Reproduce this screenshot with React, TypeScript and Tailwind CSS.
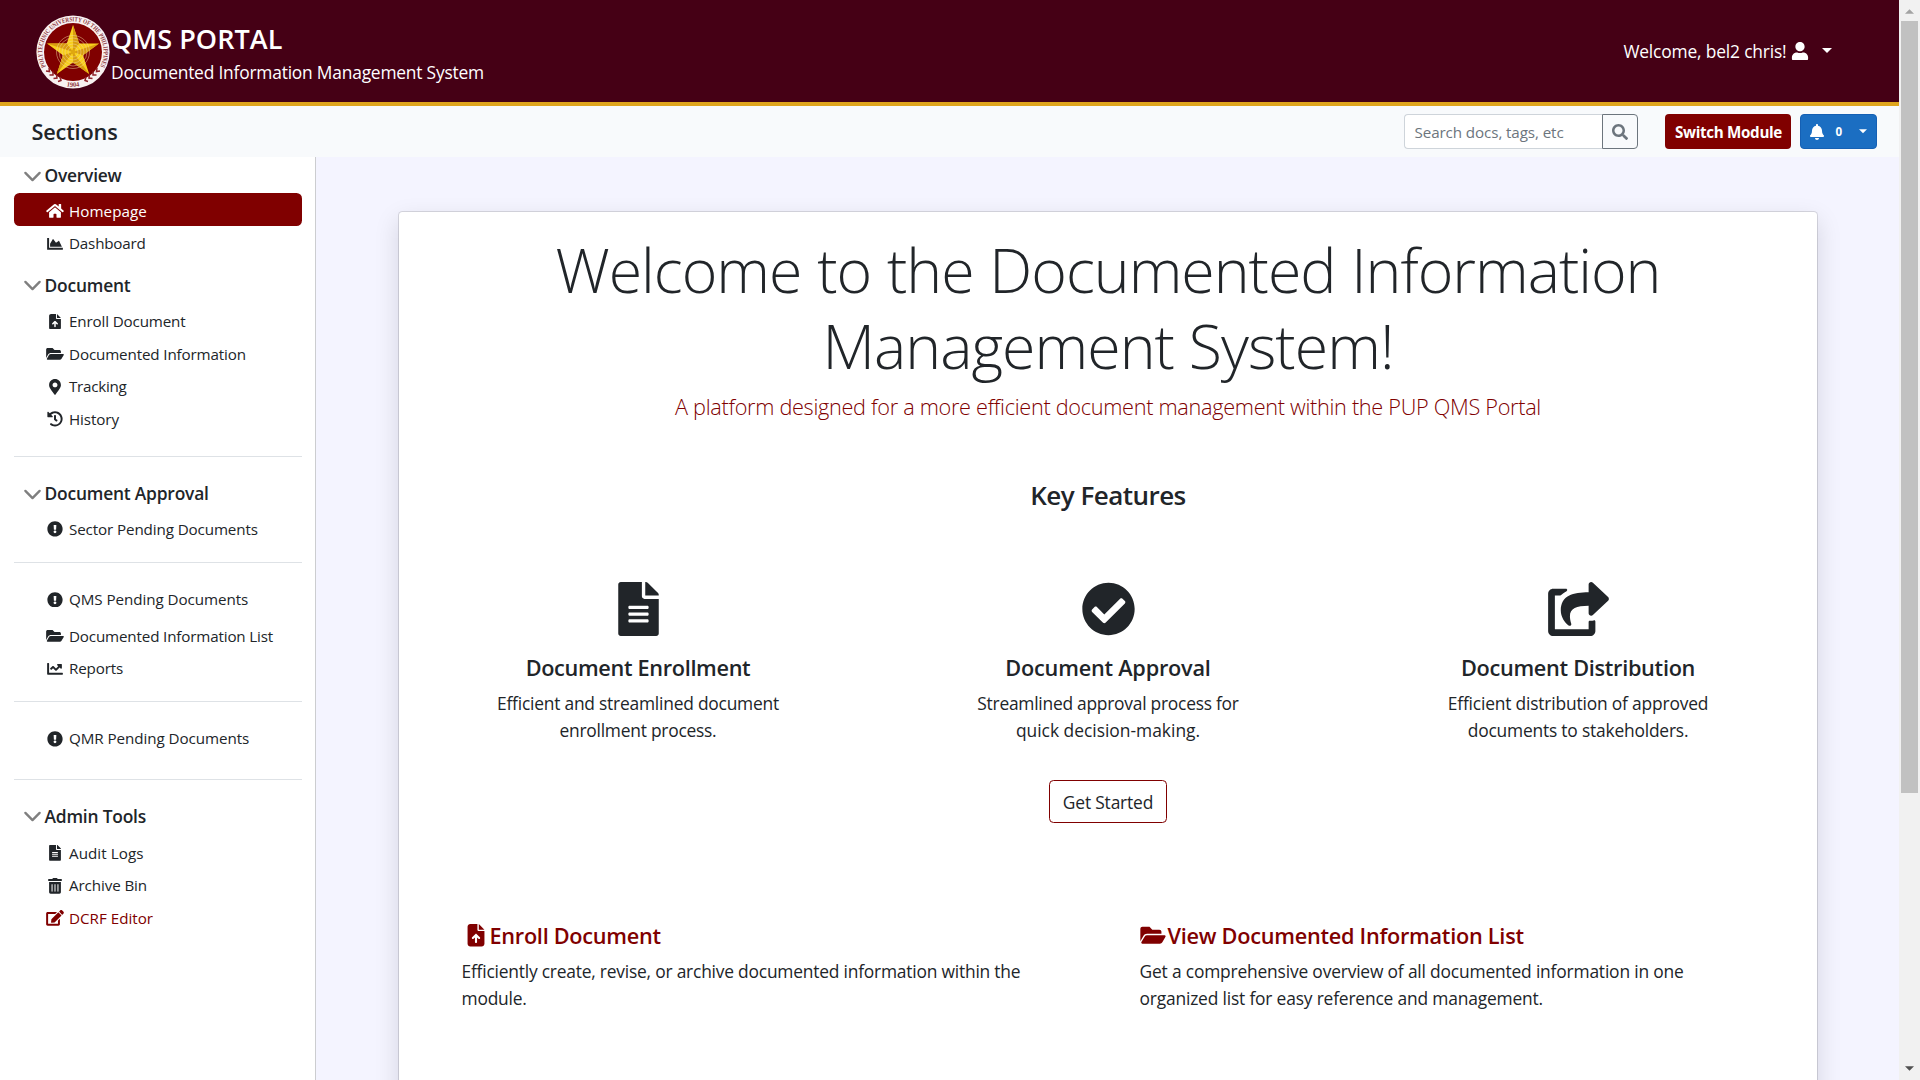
import type { ReactNode } from "react";
import type { IconType } from "react-icons";
import {
  FaBell,
  FaChartArea,
  FaChartLine,
  FaCheckCircle,
  FaEdit,
  FaExclamationCircle,
  FaFileAlt,
  FaFolderOpen,
  FaHistory,
  FaHome,
  FaMapMarkerAlt,
  FaSearch,
  FaShareSquare,
  FaTrashAlt,
  FaUser,
} from "react-icons/fa";
import { FaFileArrowUp } from "react-icons/fa6";

function Seal() {
  const rings = [5, 8, 11, 14, 16.5];
  return (
    <svg viewBox="0 0 74 74" className="h-[74px] w-[74px] shrink-0">
      <defs>
        <path id="sealTop" d="M9.9 51.5 A30.7 30.7 0 1 1 64.1 51.5" />
        <path id="sealBottom" d="M24 69.3 A34.8 34.8 0 0 0 50 69.3" />
      </defs>
      <circle cx="37" cy="37" r="36.6" fill="#f8f1f1" />
      <circle cx="37" cy="37" r="29" fill="#800000" />
      <text fontFamily="Liberation Serif" fontSize="6.6" fontWeight="700" fill="#8f3a40">
        <textPath href="#sealTop" textLength="126" lengthAdjust="spacingAndGlyphs">
          POLYTECHNIC UNIVERSITY OF THE PHILIPPINES
        </textPath>
      </text>
      <text fontFamily="Liberation Serif" fontSize="6.6" fontWeight="700" fill="#8f3a40" textAnchor="middle">
        <textPath href="#sealBottom" startOffset="50%">
          1904
        </textPath>
      </text>
      <g fill="none" stroke="#8f2028" strokeWidth="1.5">
        <path d="M10 56l3.5 0.5l-0.5-3.5M13.5 60l3.5 0l0-3.5M17.5 63.5l3.5-0.5l-0.5-3.5M22 66.5l3-1l-1-3.5" />
        <path d="M64 56l-3.5 0.5l0.5-3.5M60.5 60l-3.5 0l0-3.5M56.5 63.5l-3.5-0.5l0.5-3.5M52 66.5l-3-1l1-3.5" />
      </g>
      <polygon
        points="37,10 43.2,28.6 63,28.5 47,40.3 53.2,59 37,47.5 20.8,59 27,40.3 11,28.5 30.8,28.6"
        fill="#f8cf1c"
      />
      <g fill="#d99d10">
        <polygon points="37,10 37,37 43.2,28.6" />
        <polygon points="63,28.5 37,37 47,40.3" />
        <polygon points="53.2,59 37,37 37,47.5" />
        <polygon points="20.8,59 37,37 27,40.3" />
        <polygon points="11,28.5 37,37 30.8,28.6" />
      </g>
      {rings.map((r) => (
        <circle key={r} cx="37" cy="37" r={r} fill="none" stroke="#f3d9a0" strokeOpacity="0.6" strokeWidth="0.8" />
      ))}
      <circle cx="37" cy="37" r="2.4" fill="#e0a80f" />
    </svg>
  );
}

function Caret({ className }: { className: string }) {
  return (
    <svg viewBox="0 0 10 5" className={className}>
      <path d="M0 0h10L5 5z" fill="currentColor" />
    </svg>
  );
}

function SectionHead({ children, className }: { children: ReactNode; className: string }) {
  return (
    <div className={`flex h-[27px] items-center pl-[8.5px] text-[17.4px] font-semibold whitespace-nowrap ${className}`}>
      <svg viewBox="0 0 16 16" className="mt-[2px] mr-[3px] h-[19px] w-[19px] shrink-0">
        <path
          d="m2 5 6 6 6-6"
          fill="none"
          stroke="rgba(0,0,0,0.5)"
          strokeWidth="2"
          strokeLinecap="round"
          strokeLinejoin="round"
        />
      </svg>
      {children}
    </div>
  );
}

function Item({ icon: Icon, children, className = "" }: { icon: IconType; children: ReactNode; className?: string }) {
  return (
    <div
      className={`flex h-[32.6px] items-center rounded-[5.5px] pt-[4px] pl-[31px] text-[15.2px] whitespace-nowrap ${className}`}
    >
      <span className="mr-[4px] flex w-[20px] shrink-0 justify-center">
        <Icon className="h-[15.75px] w-[18px]" />
      </span>
      {children}
    </div>
  );
}

function Divider({ className }: { className: string }) {
  return <div className={`h-px bg-[#dee2e6] ${className}`} />;
}

function Sidebar() {
  return (
    <aside className="flex w-[316px] shrink-0 flex-col border-r border-[#cccdd0] bg-white pr-[13px] pl-[14px]">
      <SectionHead className="mt-[5px] tracking-[-0.23px]">Overview</SectionHead>
      <Item icon={FaHome} className="mt-[4px] bg-[#800000] tracking-[0.06px] text-white">Homepage</Item>
      <Item icon={FaChartArea} className="tracking-[-0.19px]">Dashboard</Item>

      <SectionHead className="mt-[13.2px] tracking-[-0.2px]">Document</SectionHead>
      <Item icon={FaFileArrowUp} className="mt-[4.8px] tracking-[-0.15px]">Enroll Document</Item>
      <Item icon={FaFolderOpen} className="tracking-[-0.14px]">Documented Information</Item>
      <Item icon={FaMapMarkerAlt} className="tracking-[-0.27px]">Tracking</Item>
      <Item icon={FaHistory} className="tracking-[-0.09px]">History</Item>

      <Divider className="mt-[22.4px]" />
      <SectionHead className="mt-[23px] tracking-[-0.2px]">Document Approval</SectionHead>
      <Item icon={FaExclamationCircle} className="mt-[4px] tracking-[-0.12px]">Sector Pending Documents</Item>

      <Divider className="mt-[18.4px]" />
      <Item icon={FaExclamationCircle} className="mt-[18.3px] tracking-[-0.07px]">QMS Pending Documents</Item>
      <Item icon={FaFolderOpen} className="mt-[4px] tracking-[-0.16px]">Documented Information List</Item>
      <Item icon={FaChartLine} className="tracking-[-0.17px]">Reports</Item>

      <Divider className="mt-[17.5px]" />
      <Item icon={FaExclamationCircle} className="mt-[19px] tracking-[-0.07px]">QMR Pending Documents</Item>

      <Divider className="mt-[26.4px]" />
      <SectionHead className="mt-[22px] tracking-[-0.2px]">Admin Tools</SectionHead>
      <Item icon={FaFileAlt} className="mt-[5.4px] tracking-[0.055px]">Audit Logs</Item>
      <Item icon={FaTrashAlt} className="tracking-[-0.11px]">Archive Bin</Item>
      <Item icon={FaEdit} className="text-[#800000]">DCRF Editor</Item>
    </aside>
  );
}

function Feature({ icon: Icon, title, children }: { icon: IconType; title: ReactNode; children: ReactNode }) {
  return (
    <div className="flex flex-1 flex-col items-center">
      <Icon className="h-[54px] w-[61px]" />
      <h5 className="mt-[18px] text-[21.7px] leading-[27px] font-semibold">{title}</h5>
      <p className="mt-[9px] text-center text-[17.4px] leading-[27px]">{children}</p>
    </div>
  );
}

export default function App() {
  return (
    <div className="flex h-[1080px] w-[1920px] overflow-hidden bg-[#f4f4ff] font-['Open_Sans',sans-serif] text-[#212529]">
      <div className="flex w-[1899px] flex-col">
        <header className="flex h-[106px] shrink-0 items-center justify-between border-b-4 border-[#dfa51d] bg-[#450015] pr-[67px] pl-[35.5px] text-white">
          <div className="flex items-center gap-[1.5px] pt-[1px]">
            <Seal />
            <div className="mt-[7px] flex flex-col">
              <span className="text-[27px] leading-[34px] font-semibold tracking-[0.05px]">QMS PORTAL</span>
              <span className="text-[17.4px] leading-[33px] tracking-[-0.21px]">
                Documented Information Management System
              </span>
            </div>
          </div>
          <div className="flex items-center text-[17.4px] tracking-[-0.17px]">
            <span>Welcome, bel2 chris!</span>
            <FaUser className="ml-[4px] h-[18.5px] w-[18px]" />
            <Caret className="ml-[13.5px] h-[5px] w-[10px]" />
          </div>
        </header>

        <div className="flex h-[51px] shrink-0 items-center bg-[#f8fafc] pr-[22px] pl-[31.5px]">
          <h5 className="pt-[2px] text-[21.7px] font-semibold tracking-[-0.17px]">Sections</h5>
          <div className="ml-auto flex h-[35px] w-[234px]">
            <div className="flex flex-1 items-center rounded-l-[4px] border border-r-0 border-[#ced4da] bg-white pt-[1px] pl-[9.5px] text-[15.2px] tracking-[-0.1px] text-[#6c757d]">
              Search docs, tags, etc
            </div>
            <div className="flex w-[36px] items-center justify-center rounded-r-[4px] border border-[#6c757d] text-[#6c757d]">
              <FaSearch className="h-[16px] w-[16px]" />
            </div>
          </div>
          <div className="ml-[27px] flex h-[35px] w-[126px] items-center justify-center rounded-[4px] bg-[#800000] pt-[2px] pl-[1px] text-[15.2px] font-bold tracking-[-0.33px] whitespace-nowrap text-white">
            Switch Module
          </div>
          <div className="ml-[9px] flex h-[35px] w-[77px] items-center rounded-[4px] border border-[#1560b4] bg-[#1b6ec2] pl-[8px] text-white">
            <FaBell className="h-[16px] w-[16px]" />
            <span className="ml-[10.5px] pt-[1px] text-[11.6px] font-bold">0</span>
            <Caret className="ml-[16.5px] h-[4.5px] w-[8px]" />
          </div>
        </div>

        <div className="flex min-h-0 flex-1">
          <Sidebar />
          <main className="flex-1 overflow-hidden pt-[54px] pl-[82px]">
            <div className="flex h-[1000px] w-[1420px] flex-col rounded-[4.5px] border border-black/[0.12] bg-white bg-clip-padding shadow-[0_9px_24px_rgba(0,0,20,0.13)]">
              <h1 className="mt-[20px] text-center text-[60.8px] leading-[76px] font-light whitespace-nowrap">
                <span className="tracking-[-1.01px] [word-spacing:1px]">Welcome to the Documented Information</span>
                <br />
                <span className="tracking-[-0.95px]">Management System!</span>
              </h1>
              <p className="mt-[6px] text-center text-[21.7px] leading-[34px] font-light tracking-[-0.3px] text-[#800000]">
                A platform designed for a more efficient document management within the PUP QMS Portal
              </p>
              <h4 className="mt-[55px] text-center text-[26px] leading-[32px] font-semibold tracking-[-0.53px]">
                Key Features
              </h4>

              <div className="mt-[71px] flex px-[4px]">
                <Feature icon={FaFileAlt} title={<span className="tracking-[-0.33px]">Document Enrollment</span>}>
                  <span className="tracking-[-0.22px]">Efficient and streamlined document</span>
                  <br />
                  <span className="tracking-[-0.24px]">enrollment process.</span>
                </Feature>
                <Feature icon={FaCheckCircle} title={<span className="tracking-[-0.22px]">Document Approval</span>}>
                  <span className="tracking-[-0.25px]">Streamlined approval process for</span>
                  <br />
                  quick decision-making.
                </Feature>
                <Feature icon={FaShareSquare} title={<span className="tracking-[-0.29px]">Document Distribution</span>}>
                  <span className="tracking-[-0.18px]">Efficient distribution of approved</span>
                  <br />
                  <span className="tracking-[-0.2px]">documents to stakeholders.</span>
                </Feature>
              </div>

              <div className="mt-[36px] flex h-[43px] w-[118px] items-center justify-center self-center rounded-[4.5px] border border-[#800000] pt-[1px] text-[17.4px] tracking-[-0.18px]">
                Get Started
              </div>

              <div className="mt-[99px] flex pl-[62.5px]">
                <div className="w-[678px]">
                  <h5 className="flex items-center text-[21.7px] leading-[27px] font-semibold tracking-[-0.28px] text-[#800000]">
                    <span className="flex w-[28px] justify-center">
                      <FaFileArrowUp className="h-[22.5px] w-[26px]" />
                    </span>
                    Enroll Document
                  </h5>
                  <p className="mt-[9px] text-[17.4px] leading-[27px] tracking-[-0.21px]">
                    Efficiently create, revise, or archive documented information within the
                    <br />
                    module.
                  </p>
                </div>
                <div>
                  <h5 className="flex items-center text-[21.7px] leading-[27px] font-semibold tracking-[-0.26px] text-[#800000]">
                    <span className="flex w-[28px]">
                      <FaFolderOpen className="h-[22.5px] w-[26px]" />
                    </span>
                    View Documented Information List
                  </h5>
                  <p className="mt-[9px] text-[17.4px] leading-[27px] tracking-[-0.18px]">
                    Get a comprehensive overview of all documented information in one
                    <br />
                    organized list for easy reference and management.
                  </p>
                </div>
              </div>
            </div>
          </main>
        </div>
      </div>

      <div className="flex w-[21px] flex-col items-center justify-between bg-[#f1f1f1] py-[9px]">
        <Caret className="h-[5px] w-[9px] rotate-180 text-[#a3a3a3]" />
        <div className="mt-[7px] mb-auto h-[772px] w-[17px] bg-[#c1c1c1]" />
        <Caret className="h-[5px] w-[9px] text-[#505050]" />
      </div>
    </div>
  );
}
